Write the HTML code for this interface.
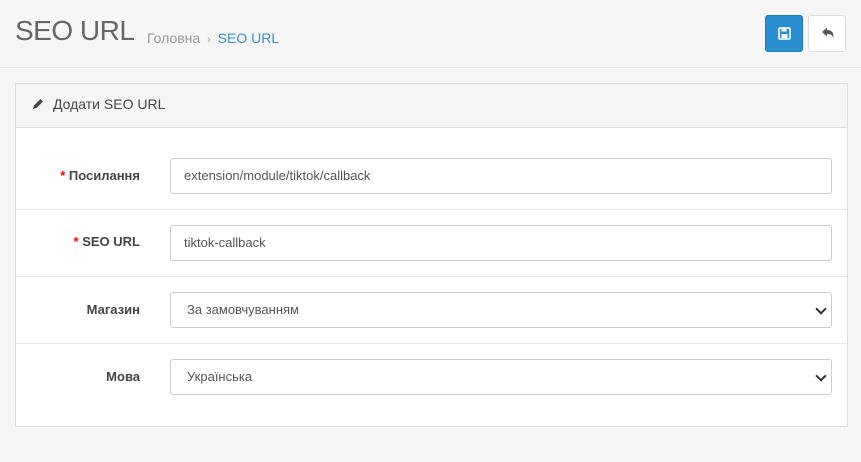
<!DOCTYPE html>
<html><head><meta charset="utf-8"><style>
*{box-sizing:border-box}
body{margin:0;width:861px;height:462px;background:#f6f6f6;font-family:"Liberation Sans","Noto Sans CJK SC",sans-serif;font-size:12px;color:#666;overflow:hidden;position:relative}
.hdr{position:absolute;left:0;top:0;width:861px;height:68px;border-bottom:1px solid #e4e4e4}
h1{position:absolute;left:15px;top:15px;margin:0;font-weight:normal;font-size:28px;color:#666;letter-spacing:-0.5px}
.bc{position:absolute;left:147px;top:30px;font-size:14px;color:#999}
.bc a{color:#3a8fcf}
.btn{position:absolute;top:15px;width:38px;height:37px;border-radius:3px}
.b1{left:765px;background:#2a8fd0;border:1px solid #1f7bb8}
.b2{left:808px;background:#fff;border:1px solid #ddd}
.panel{position:absolute;left:15px;top:83px;width:833px;height:344px;border:1px solid #ddd;background:#fff}
.ph{height:44px;background:#f5f5f5;border-bottom:1px solid #ddd;padding:12px 0 0 37px;font-size:14px;color:#444;position:relative}
.row{position:absolute;left:0;width:831px;border-top:1px solid #e8e8e8;height:67px}
.lbl{position:absolute;right:707px;top:25px;font-weight:bold;color:#444;font-size:13px;white-space:nowrap}
.lbl b{color:#f00;font-weight:bold}
.in{position:absolute;left:154px;top:15px;width:662px;height:36px;border:1px solid #ccc;border-radius:3px;padding:9px 13px;font-size:13px;color:#555}
.sel::after{content:"";position:absolute;right:6px;top:12px;width:6px;height:6px;border-right:2px solid #333;border-bottom:2px solid #333;transform:rotate(45deg)}
.sel{padding-left:16px}
</style></head><body>
<div class="hdr">
<h1>SEO URL</h1>
<div class="bc">Головна <span style="font-size:11px;margin:0 3px">›</span> <a>SEO URL</a></div>
<div class="btn b1"><svg width="36" height="35" viewBox="0 0 36 35"><rect x="13" y="12" width="11" height="11" rx="1" fill="none" stroke="#fff" stroke-width="1.6"/><rect x="15.5" y="12" width="5" height="3.5" fill="#fff"/><rect x="15.5" y="18" width="6" height="4" fill="#fff"/></svg></div>
<div class="btn b2"><svg width="36" height="35" viewBox="0 0 36 35"><path d="M13 16 L18 11.5 V14 C22 14 25 16 24.5 22 C23.5 19 21.5 18 18 18 V20.5 Z" fill="#555"/></svg></div>
</div>
<div class="panel">
<div class="ph"><svg style="position:absolute;left:15px;top:13px" width="14" height="14" viewBox="0 0 14 14"><path d="M2 12 L3 8.5 L9.5 2 L12 4.5 L5.5 11 Z" fill="#444"/></svg>Додати SEO URL</div>
<div class="row" style="top:44px;border-top:none;height:81px"><div class="lbl" style="top:40px"><b>*</b> Посилання</div><div class="in" style="top:30px">extension/module/tiktok/callback</div></div>
<div class="row" style="top:125px"><div class="lbl" style="top:24px"><b>*</b> SEO URL</div><div class="in">tiktok-callback</div></div>
<div class="row" style="top:192px"><div class="lbl" style="top:25px">Магазин</div><div class="in sel">За замовчуванням</div></div>
<div class="row" style="top:259px"><div class="lbl" style="top:25px">Мова</div><div class="in sel">Українська</div></div>
</div>
</body></html>
